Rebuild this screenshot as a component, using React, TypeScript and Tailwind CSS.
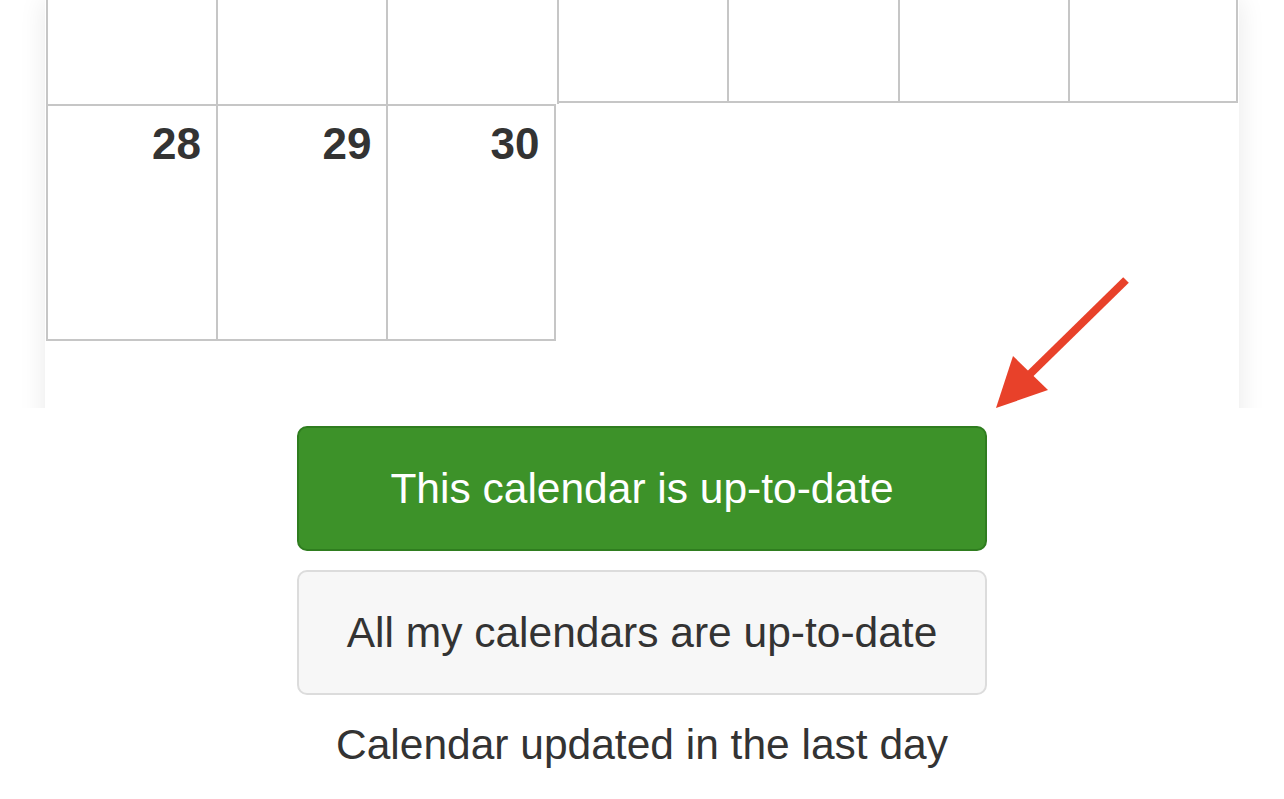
const topCells = [0, 1, 2, 3, 4, 5, 6];
const lastRow = ["28", "29", "30"];

const widthFor = (i: number) =>
  i === 0 ? "w-[172px] border-l-2 " : i === 6 ? "w-[168px] " : "w-[170.4px] ";

const Arrow = () => (
  <svg
    className="absolute left-[990px] top-[270px]"
    width="145"
    height="145"
    viewBox="0 0 145 145"
  >
    <line x1="136" y1="10" x2="40" y2="104" stroke="#e8412a" strokeWidth="8" />
    <polygon points="6,138 23,86 58,120" fill="#e8412a" />
  </svg>
);

const App = () => {
  return (
    <div
      className="relative h-[799px] w-[1284px] overflow-hidden bg-white text-[#333333]"
      style={{ fontFamily: '"Liberation Sans", Arial, sans-serif' }}
    >
      {/* calendar panel, cut at the bottom */}
      <div className="h-[408px] overflow-hidden">
        <div className="ml-[45px] h-[600px] w-[1194px] bg-white px-px shadow-[0_0_26px_rgba(0,0,0,0.09)]">
          <div className="flex">
            {topCells.map((i) => (
              <div
                key={i}
                className={
                  widthFor(i) +
                  (i < 3
                    ? "h-[104px] border-r-2 border-[#c6c6c6]"
                    : "h-[103px] border-r-2 border-b-2 border-[#c6c6c6]")
                }
              />
            ))}
          </div>
          <div className="flex">
            {lastRow.map((day, i) => (
              <div
                key={day}
                className={
                  (i === 0 ? "w-[172px] border-l-2 " : i === 2 ? "w-[168px] " : "w-[170.4px] ") +
                  "h-[237px] border-t-2 border-r-2 border-b-2 border-[#c6c6c6] pt-[16px] pr-[15px] text-right"
                }
              >
                <span className="text-[44px] font-bold leading-none">{day}</span>
              </div>
            ))}
          </div>
        </div>
      </div>

      <div className="flex flex-col items-center">
        <button className="mt-[18px] flex h-[125px] w-[690px] items-center justify-center rounded-[10px] border-2 border-[#2f7d1f] bg-[#3d9229] text-[42.5px] text-white">
          This calendar is up-to-date
        </button>
        <button className="mt-[19px] flex h-[125px] w-[690px] items-center justify-center rounded-[10px] border-2 border-[#dcdcdc] bg-[#f7f7f7] text-[42.5px] text-[#333333]">
          All my calendars are up-to-date
        </button>
        <div className="flex h-[100px] items-center text-[42.5px]">
          Calendar updated in the last day
        </div>
      </div>

      <Arrow />
    </div>
  );
};

export default App;
